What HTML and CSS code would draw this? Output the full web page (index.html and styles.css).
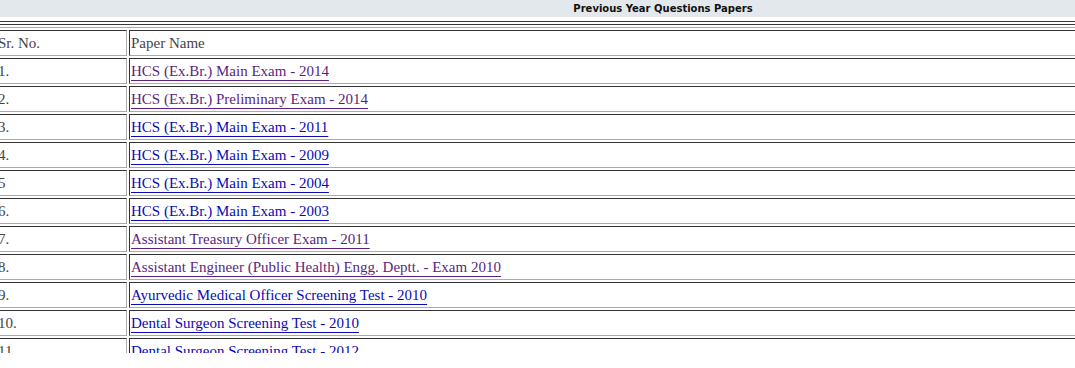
FILE: index.html
```html
<!DOCTYPE html>
<html>
<head>
<meta charset="utf-8">
<link rel="stylesheet" href="styles.css">
</head>
<body>
<div class="viewport">
  <div class="page">
    <div class="titlebar">Previous Year Questions Papers</div>
    <div class="rule"></div>
    <table class="papers">
      <tr><td class="sr">Sr. No.</td><td class="name">Paper Name</td></tr>
      <tr><td class="sr">1.</td><td><a class="visited" href="#">HCS (Ex.Br.) Main Exam - 2014</a></td></tr>
      <tr><td class="sr">2.</td><td><a class="visited" href="#">HCS (Ex.Br.) Preliminary Exam - 2014</a></td></tr>
      <tr><td class="sr">3.</td><td><a href="#">HCS (Ex.Br.) Main Exam - 2011</a></td></tr>
      <tr><td class="sr">4.</td><td><a href="#">HCS (Ex.Br.) Main Exam - 2009</a></td></tr>
      <tr><td class="sr">5</td><td><a href="#">HCS (Ex.Br.) Main Exam - 2004</a></td></tr>
      <tr><td class="sr">6.</td><td><a href="#">HCS (Ex.Br.) Main Exam - 2003</a></td></tr>
      <tr><td class="sr">7.</td><td><a class="visited" href="#">Assistant Treasury Officer Exam - 2011</a></td></tr>
      <tr><td class="sr">8.</td><td><a class="visited" href="#">Assistant Engineer (Public Health) Engg. Deptt. - Exam 2010</a></td></tr>
      <tr><td class="sr">9.</td><td><a href="#">Ayurvedic Medical Officer Screening Test - 2010</a></td></tr>
      <tr><td class="sr">10.</td><td><a href="#">Dental Surgeon Screening Test - 2010</a></td></tr>
      <tr><td class="sr">11.</td><td><a href="#">Dental Surgeon Screening Test - 2012</a></td></tr>
    </table>
  </div>
</div>
</body>
</html>
```

FILE: styles.css
```css
html, body {
  margin: 0;
  padding: 0;
  background: #ffffff;
}

.viewport {
  width: 1075px;
  height: 353px;
  overflow: hidden;
}

.page {
  width: 1340px;
  margin-left: -7px;
}

.titlebar {
  height: 17px;
  background: #e2e8ec;
  text-align: center;
  font-family: "DejaVu Sans", Verdana, sans-serif;
  font-weight: bold;
  font-size: 10px;
  line-height: 18px;
  color: #111;
}

.rule {
  margin-top: 4px;
  height: 2px;
  border-top: 1px solid #3a3a3a;
  border-bottom: 1px solid #3a3a3a;
}

.papers {
  width: 100%;
  margin-top: 2px;
  border-collapse: separate;
  border-spacing: 2px;
  border-top: 1px solid #aaaaaa;
  border-left: 1px solid #aaaaaa;
  font-family: "Liberation Serif", "Times New Roman", serif;
  font-size: 15px;
  color: #444;
}

.papers td {
  height: 24px;
  padding: 0 1px;
  border-top: 1px solid #333;
  border-left: 1px solid #333;
  border-bottom: 1px solid #aaa;
  border-right: 1px solid #aaa;
  vertical-align: middle;
  white-space: nowrap;
}

.papers td.sr {
  width: 127px;
  color: #444;
}

.papers a {
  color: #0a0ab4;
  text-decoration: underline;
  text-underline-offset: 4px;
  text-decoration-thickness: 1px;
}

.papers a.visited {
  color: #5a1f80;
}
```
